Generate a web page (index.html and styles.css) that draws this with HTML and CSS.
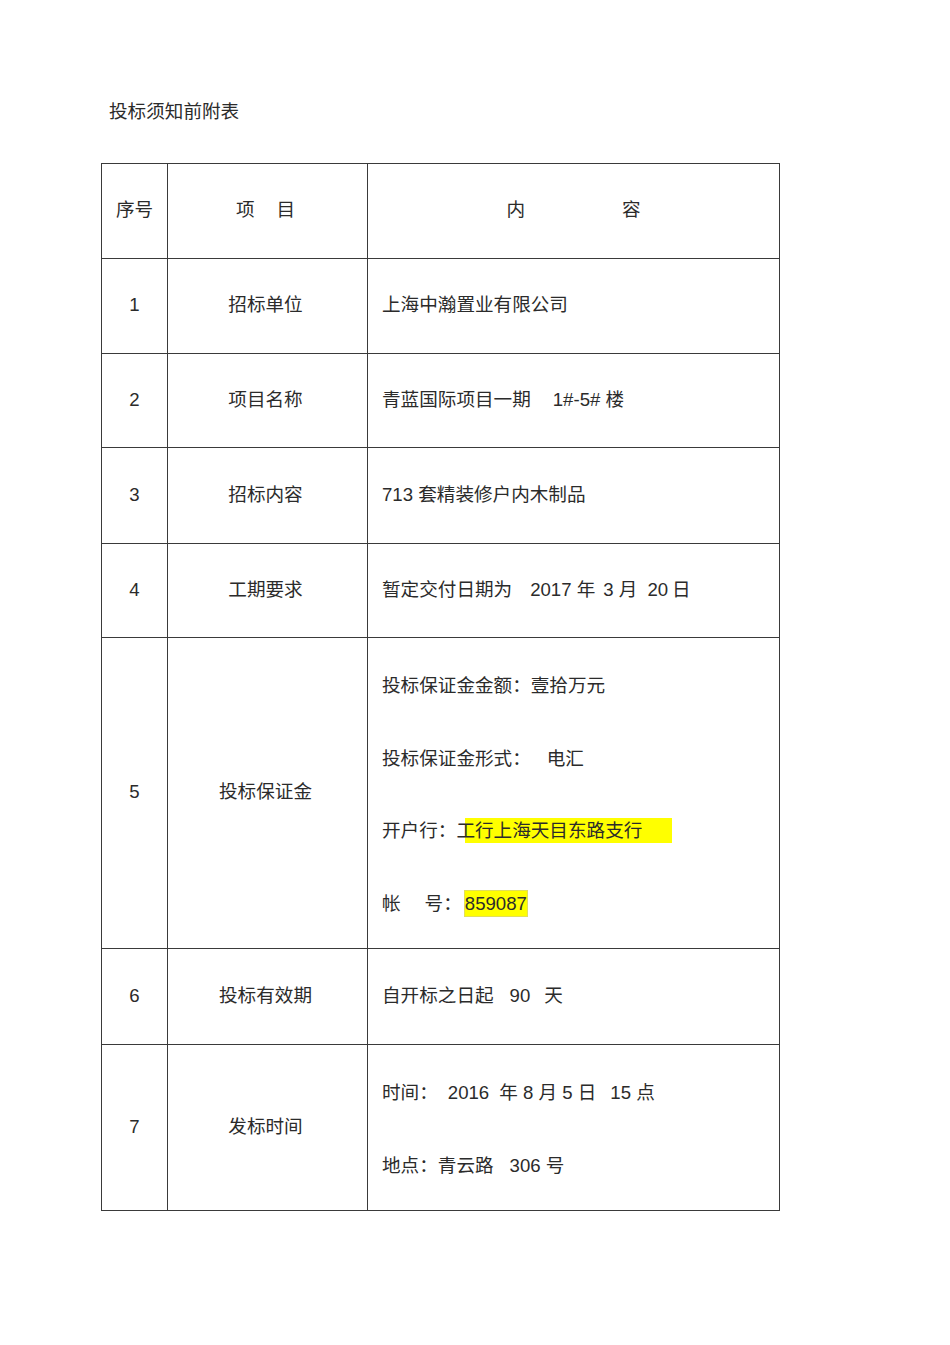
FILE: index.html
```html
<!DOCTYPE html>
<html lang="zh-CN">
<head>
<meta charset="utf-8">
<title>投标须知前附表</title>
<link rel="stylesheet" href="styles.css">
</head>
<body>
<div class="page">
  <p class="title">投标须知前附表</p>
  <table class="grid">
    <colgroup>
      <col class="col-no">
      <col class="col-item">
      <col class="col-content">
    </colgroup>
    <tr class="h95">
      <td class="c-no">序号</td>
      <td class="c-item"><span>项</span><span class="gap-item">目</span></td>
      <td class="c-head"><span>内</span><span class="gap-head">容</span></td>
    </tr>
    <tr class="h95">
      <td class="c-no">1</td>
      <td class="c-item">招标单位</td>
      <td class="c-text">上海中瀚置业有限公司</td>
    </tr>
    <tr class="h94">
      <td class="c-no">2</td>
      <td class="c-item">项目名称</td>
      <td class="c-text">青蓝国际项目一期<span class="g22">1#-5#</span> 楼</td>
    </tr>
    <tr class="h96">
      <td class="c-no">3</td>
      <td class="c-item">招标内容</td>
      <td class="c-text">713 套精装修户内木制品</td>
    </tr>
    <tr class="h94">
      <td class="c-no">4</td>
      <td class="c-item">工期要求</td>
      <td class="c-text">暂定交付日期为<span class="g18">2017</span> 年<span class="g8">3</span> 月<span class="g10">20</span><span class="g4">日</span></td>
    </tr>
    <tr class="h311">
      <td class="c-no">5</td>
      <td class="c-item">投标保证金</td>
      <td class="c-text c-multi">
        <div class="line">投标保证金金额：壹拾万元</div>
        <div class="line">投标保证金形式：<span class="g16">电汇</span></div>
        <div class="line">开户行：<span class="hl hl-bank">工行上海天目东路支行</span></div>
        <div class="line"><span>帐</span><span class="g24">号：</span><span class="hl hl-acct">859087</span></div>
      </td>
    </tr>
    <tr class="h96">
      <td class="c-no">6</td>
      <td class="c-item">投标有效期</td>
      <td class="c-text">自开标之日起<span class="g16">90</span><span class="g14">天</span></td>
    </tr>
    <tr class="h166">
      <td class="c-no">7</td>
      <td class="c-item">发标时间</td>
      <td class="c-text c-multi">
        <div class="line">时间：<span class="g10">2016</span><span class="g10">年</span> 8 月 5 日<span class="g14">15</span> 点</div>
        <div class="line">地点：青云路<span class="g16">306</span> 号</div>
      </td>
    </tr>
  </table>
</div>
</body>
</html>
```

FILE: styles.css
```css
html, body {
  margin: 0;
  padding: 0;
  background: #ffffff;
}

body {
  font-family: "Liberation Sans", "Noto Sans CJK SC", sans-serif;
  font-size: 18.6px;
  color: #2b2b2b;
}

.page {
  padding: 100px 0 0 101px;
}

.title {
  margin: 0 0 39px 8px;
  line-height: 24px;
}

.grid {
  border-collapse: collapse;
  table-layout: fixed;
  width: 678px;
}

.col-no { width: 66px; }
.col-item { width: 200px; }
.col-content { width: 412px; }

.grid td {
  border: 1.5px solid #3a3a3a;
  padding: 6px 0 8px 0;
  vertical-align: middle;
  line-height: 24px;
}

.h94 { height: 94px; }
.h95 { height: 95px; }
.h96 { height: 96px; }
.h166 { height: 166px; }
.h311 { height: 311px; }

.c-no {
  text-align: center;
}

.grid td.c-item {
  text-align: center;
  padding-right: 4px;
}

.c-head {
  text-align: center;
}

.gap-item { margin-left: 22px; }
.gap-head { margin-left: 97px; }

.grid td.c-text {
  padding-left: 14px;
}

.grid td.c-multi {
  padding-top: 11px;
  padding-bottom: 7px;
}

.line {
  line-height: 72.5px;
}

.g4 { margin-left: 4px; }
.g8 { margin-left: 8px; }
.g10 { margin-left: 10px; }
.g14 { margin-left: 14px; }
.g16 { margin-left: 16px; }
.g18 { margin-left: 18px; }
.g22 { margin-left: 22px; }
.g24 { margin-left: 24px; }

.hl {
  background-color: #ffff00;
  padding: 2px 0;
  outline: 1px solid #e2df5a;
}

.hl-bank {
  padding-right: 30px;
  background: linear-gradient(to right, transparent 9px, #ffff00 9px);
  outline: none;
}

.hl-acct {
  margin-left: 3px;
}
```
